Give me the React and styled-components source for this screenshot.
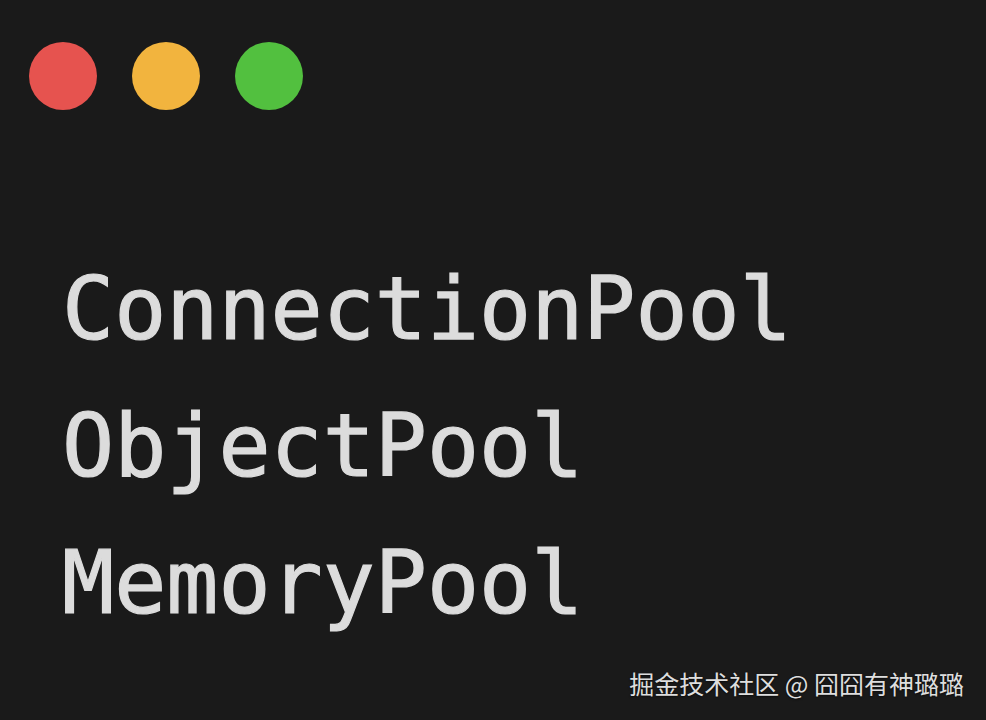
import React from "react"
import styled, { createGlobalStyle } from "styled-components"

const GlobalStyle = createGlobalStyle`
  html, body {
    margin: 0;
    padding: 0;
    background: #1a1a1a;
  }
`

const Window = styled.div`
  width: 986px;
  height: 720px;
  box-sizing: border-box;
  background: #1a1a1a;
  display: flex;
  flex-direction: column;
  padding: 42px 22px 0 29px;
  overflow: hidden;
`

const Lights = styled.div`
  display: flex;
  gap: 35px;
`

const Light = styled.span`
  width: 68px;
  height: 68px;
  border-radius: 50%;
  background: ${(p) => p.color};
  filter: blur(0.6px);
`

const Code = styled.div`
  margin-top: 131px;
  padding-left: 33px;
  display: flex;
  flex-direction: column;
  font-family: "DejaVu Sans Mono", "Liberation Mono", monospace;
  font-size: 86.6px;
  line-height: 137px;
  color: #dcdcdc;
  .line {
    white-space: pre;
    -webkit-text-stroke: 1.2px #dcdcdc;
    filter: blur(0.7px);
  }
`

const Watermark = styled.div`
  margin-top: auto;
  margin-bottom: 19px;
  align-self: flex-end;
  font-family: "Noto Sans CJK SC", "Noto Sans", sans-serif;
  font-size: 25px;
  color: #dedede;
  text-shadow: 0 1px 2px rgba(0, 0, 0, 0.6);
`

const lines = ["ConnectionPool", "ObjectPool", "MemoryPool"]

function App() {
  return (
    <>
      <GlobalStyle />
      <Window>
        <Lights>
          <Light color="#e6534f" />
          <Light color="#f2b43e" />
          <Light color="#52c03f" />
        </Lights>
        <Code>
          {lines.map((l) => (
            <div className="line" key={l}>
              {l}
            </div>
          ))}
        </Code>
        <Watermark>掘金技术社区 @ 囧囧有神璐璐</Watermark>
      </Window>
    </>
  )
}

export default App
